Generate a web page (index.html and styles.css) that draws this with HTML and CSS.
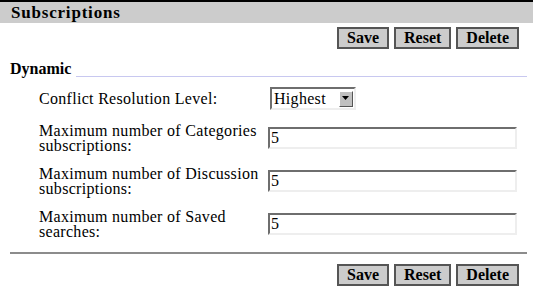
FILE: index.html
```html
<!DOCTYPE html>
<html>
<head>
<meta charset="utf-8">
<link rel="stylesheet" href="styles.css">
</head>
<body>
<div class="header">Subscriptions</div>
<div class="btnrow top">
  <button class="btn">Save</button>
  <button class="btn">Reset</button>
  <button class="btn">Delete</button>
</div>
<div class="section">
  <span class="title">Dynamic</span>
  <span class="line"></span>
</div>
<div class="form">
  <div class="label">Conflict Resolution Level:</div>
  <div class="field">
    <div class="select"><span class="val">Highest</span><span class="arrow"><svg width="8" height="5" viewBox="0 0 8 5"><path d="M0 0H7L3.5 4Z" fill="#000"/></svg></span></div>
  </div>
  <div class="label">Maximum number of Categories subscriptions:</div>
  <div class="field"><div class="input">5</div></div>
  <div class="label">Maximum number of Discussion subscriptions:</div>
  <div class="field"><div class="input">5</div></div>
  <div class="label">Maximum number of Saved searches:</div>
  <div class="field"><div class="input">5</div></div>
</div>
<div class="rule"></div>
<div class="btnrow bottom">
  <button class="btn">Save</button>
  <button class="btn">Reset</button>
  <button class="btn">Delete</button>
</div>
</body>
</html>
```

FILE: styles.css
```css
html, body {
  margin: 0;
  padding: 0;
  background: #fff;
  width: 533px;
  height: 293px;
  overflow: hidden;
  font-family: "Liberation Serif", "DejaVu Serif", serif;
  color: #000;
}
.header {
  border-top: 2px solid #000;
  background: #cccccc;
  height: 21px;
  line-height: 21px;
  padding-left: 11px;
  font-weight: bold;
  font-size: 17px;
  letter-spacing: 0.8px;
}
.btnrow {
  display: flex;
  justify-content: flex-end;
  gap: 5px;
  padding-right: 14px;
}
.btnrow.top {
  margin-top: 4px;
}
.btnrow.bottom {
  margin-top: 10px;
}
.btn {
  font-family: "Liberation Serif", "DejaVu Serif", serif;
  font-weight: bold;
  font-size: 16px;
  background: #cccccc;
  border: 2px solid #555;
  height: 22px;
  padding: 0 8px;
  margin: 0;
  line-height: 18px;
  color: #000;
}
.section {
  display: flex;
  align-items: flex-end;
  margin-top: 12px;
  padding-left: 10px;
  padding-right: 6px;
}
.title {
  font-weight: bold;
  font-size: 16px;
  line-height: 16px;
}
.line {
  flex: 1;
  border-bottom: 1px solid #c8c8f0;
  margin-left: 5px;
}
.form {
  display: grid;
  grid-template-columns: 229px 249px;
  row-gap: 13px;
  padding-left: 39px;
  margin-top: 10px;
  align-items: center;
}
.label {
  font-size: 16px;
  line-height: 15px;
  letter-spacing: 0.3px;
  width: 226px;
}
.field {
  display: flex;
}
.select {
  display: flex;
  align-items: center;
  width: 86px;
  height: 23px;
  box-sizing: border-box;
  margin-left: 2px;
  border-top: 2px solid #6e6e6e;
  border-left: 2px solid #6e6e6e;
  border-right: 2px solid #eeeeee;
  border-bottom: 2px solid #eeeeee;
  font-size: 16px;
  letter-spacing: 0.3px;
  padding-left: 2px;
}
.val {
  flex: 1;
}
.arrow {
  width: 14px;
  height: 16px;
  background: #c0c0c0;
  box-sizing: border-box;
  border-top: 1px solid #fff;
  border-left: 1px solid #fff;
  border-right: 1px solid #555;
  border-bottom: 1px solid #555;
  display: flex;
  align-items: center;
  justify-content: center;
  margin-right: 1px;
}
.input {
  width: 249px;
  height: 22px;
  box-sizing: border-box;
  border-top: 2px solid #6e6e6e;
  border-left: 2px solid #6e6e6e;
  border-right: 2px solid #eeeeee;
  border-bottom: 2px solid #eeeeee;
  font-size: 16px;
  line-height: 18px;
  padding-left: 1px;
}
.rule {
  margin: 13px 6px 0 10px;
  border-top: 2px solid #8c8c8c;
}
```
